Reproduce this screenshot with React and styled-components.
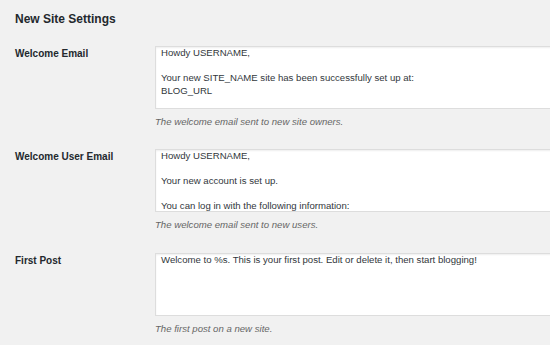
import styled, { createGlobalStyle } from 'styled-components';

const GlobalStyle = createGlobalStyle`
    html, body {
        margin: 0;
        padding: 0;
        background: #f1f1f1;
        overflow: hidden;
    }
    body {
        font-family: "Liberation Sans", Arial, sans-serif;
        color: #23282d;
    }
`;

const Page = styled.div`
    padding: 11px 0 0 15px;
    width: 700px;
`;

const Heading = styled.h2`
    font-size: 12px;
    font-weight: bold;
    margin: 0 0 19px;
    line-height: 16px;
`;

const Row = styled.div`
    display: grid;
    grid-template-columns: 140px 1fr;
    margin-bottom: ${props => props.gap}px;
`;

const Label = styled.label`
    font-size: 10px;
    font-weight: bold;
    padding-top: 1px;
    line-height: 13px;
`;

const Field = styled.div`
    display: flex;
    flex-direction: column;
`;

const TextBox = styled.textarea`
    width: 500px;
    height: 63px;
    box-sizing: border-box;
    border: 1px solid #ddd;
    box-shadow: inset 0 1px 2px rgba(0,0,0,.07);
    background: #fff;
    font-family: "Liberation Sans", Arial, sans-serif;
    font-size: 9.6px;
    line-height: 12.5px;
    color: #32373c;
    padding: 0 5px;
    margin: 0;
    resize: none;
    overflow: hidden;
    outline: none;
`;

const Description = styled.p`
    margin: 6px 0 0;
    font-size: 9.6px;
    font-style: italic;
    color: #666;
    line-height: 13px;
`;

const settings = [
    {
        label: 'Welcome Email',
        value: 'Howdy USERNAME,\n\nYour new SITE_NAME site has been successfully set up at:\nBLOG_URL\n\nYou can log in to the administrator account with the following information:',
        description: 'The welcome email sent to new site owners.',
        gap: 21,
    },
    {
        label: 'Welcome User Email',
        value: 'Howdy USERNAME,\n\nYour new account is set up.\n\nYou can log in with the following information:\nUsername: USERNAME',
        description: 'The welcome email sent to new users.',
        gap: 22,
    },
    {
        label: 'First Post',
        value: 'Welcome to %s. This is your first post. Edit or delete it, then start blogging!',
        description: 'The first post on a new site.',
        gap: 0,
    },
];

function App() {
    return (
        <Page>
            <GlobalStyle />
            <Heading>New Site Settings</Heading>
            {settings.map(item => (
                <Row key={item.label} gap={item.gap}>
                    <Label>{item.label}</Label>
                    <Field>
                        <TextBox defaultValue={item.value} readOnly />
                        <Description>{item.description}</Description>
                    </Field>
                </Row>
            ))}
        </Page>
    );
}

export default App;
